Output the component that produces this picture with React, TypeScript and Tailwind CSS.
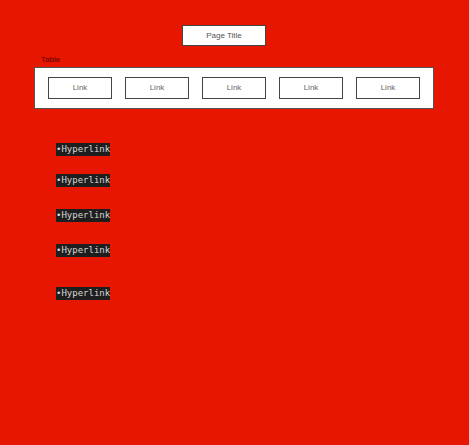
export default function App() {
  const links = ["Link", "Link", "Link", "Link", "Link"];
  const hyper = [
    "mt-[34px]",
    "mt-[18px]",
    "mt-[22px]",
    "mt-[22px]",
    "mt-[30px]",
  ];
  return (
    <div
      className="w-full h-[445px] bg-[#e61600] overflow-hidden"
      style={{ fontFamily: '"Liberation Sans", Arial, sans-serif' }}
    >
      <div className="pt-[25px]">
        <div className="ml-[182px] w-[84px] h-[21px] bg-white border border-[#444] flex items-center justify-center text-[8px] text-[#555]">
          Page Title
        </div>
      </div>
      <div className="ml-[41px] mt-[8px] h-[12px] text-[8px] leading-[12px] text-[#5a0400]">Table</div>
      <div className="ml-[34px] mt-[1px] w-[400px] h-[42px] bg-white border border-[#555] flex items-center justify-evenly">
        {links.map((l, i) => (
          <div
            key={i}
            className="w-[64px] h-[22px] border border-[#444] flex items-center justify-center text-[8px] text-[#666]"
          >
            {l}
          </div>
        ))}
      </div>
      <div className="flex flex-col items-start ml-[56px]">
        {hyper.map((m, i) => (
          <div
            key={i}
            className={`${m} h-[13px] w-[54px] bg-[#1e1e1e] text-[#d8d8d8] text-[9px] leading-[13px] whitespace-nowrap overflow-hidden`}
            style={{ fontFamily: '"DejaVu Sans Mono", monospace' }}
          >
            •Hyperlink
          </div>
        ))}
      </div>
    </div>
  );
}
